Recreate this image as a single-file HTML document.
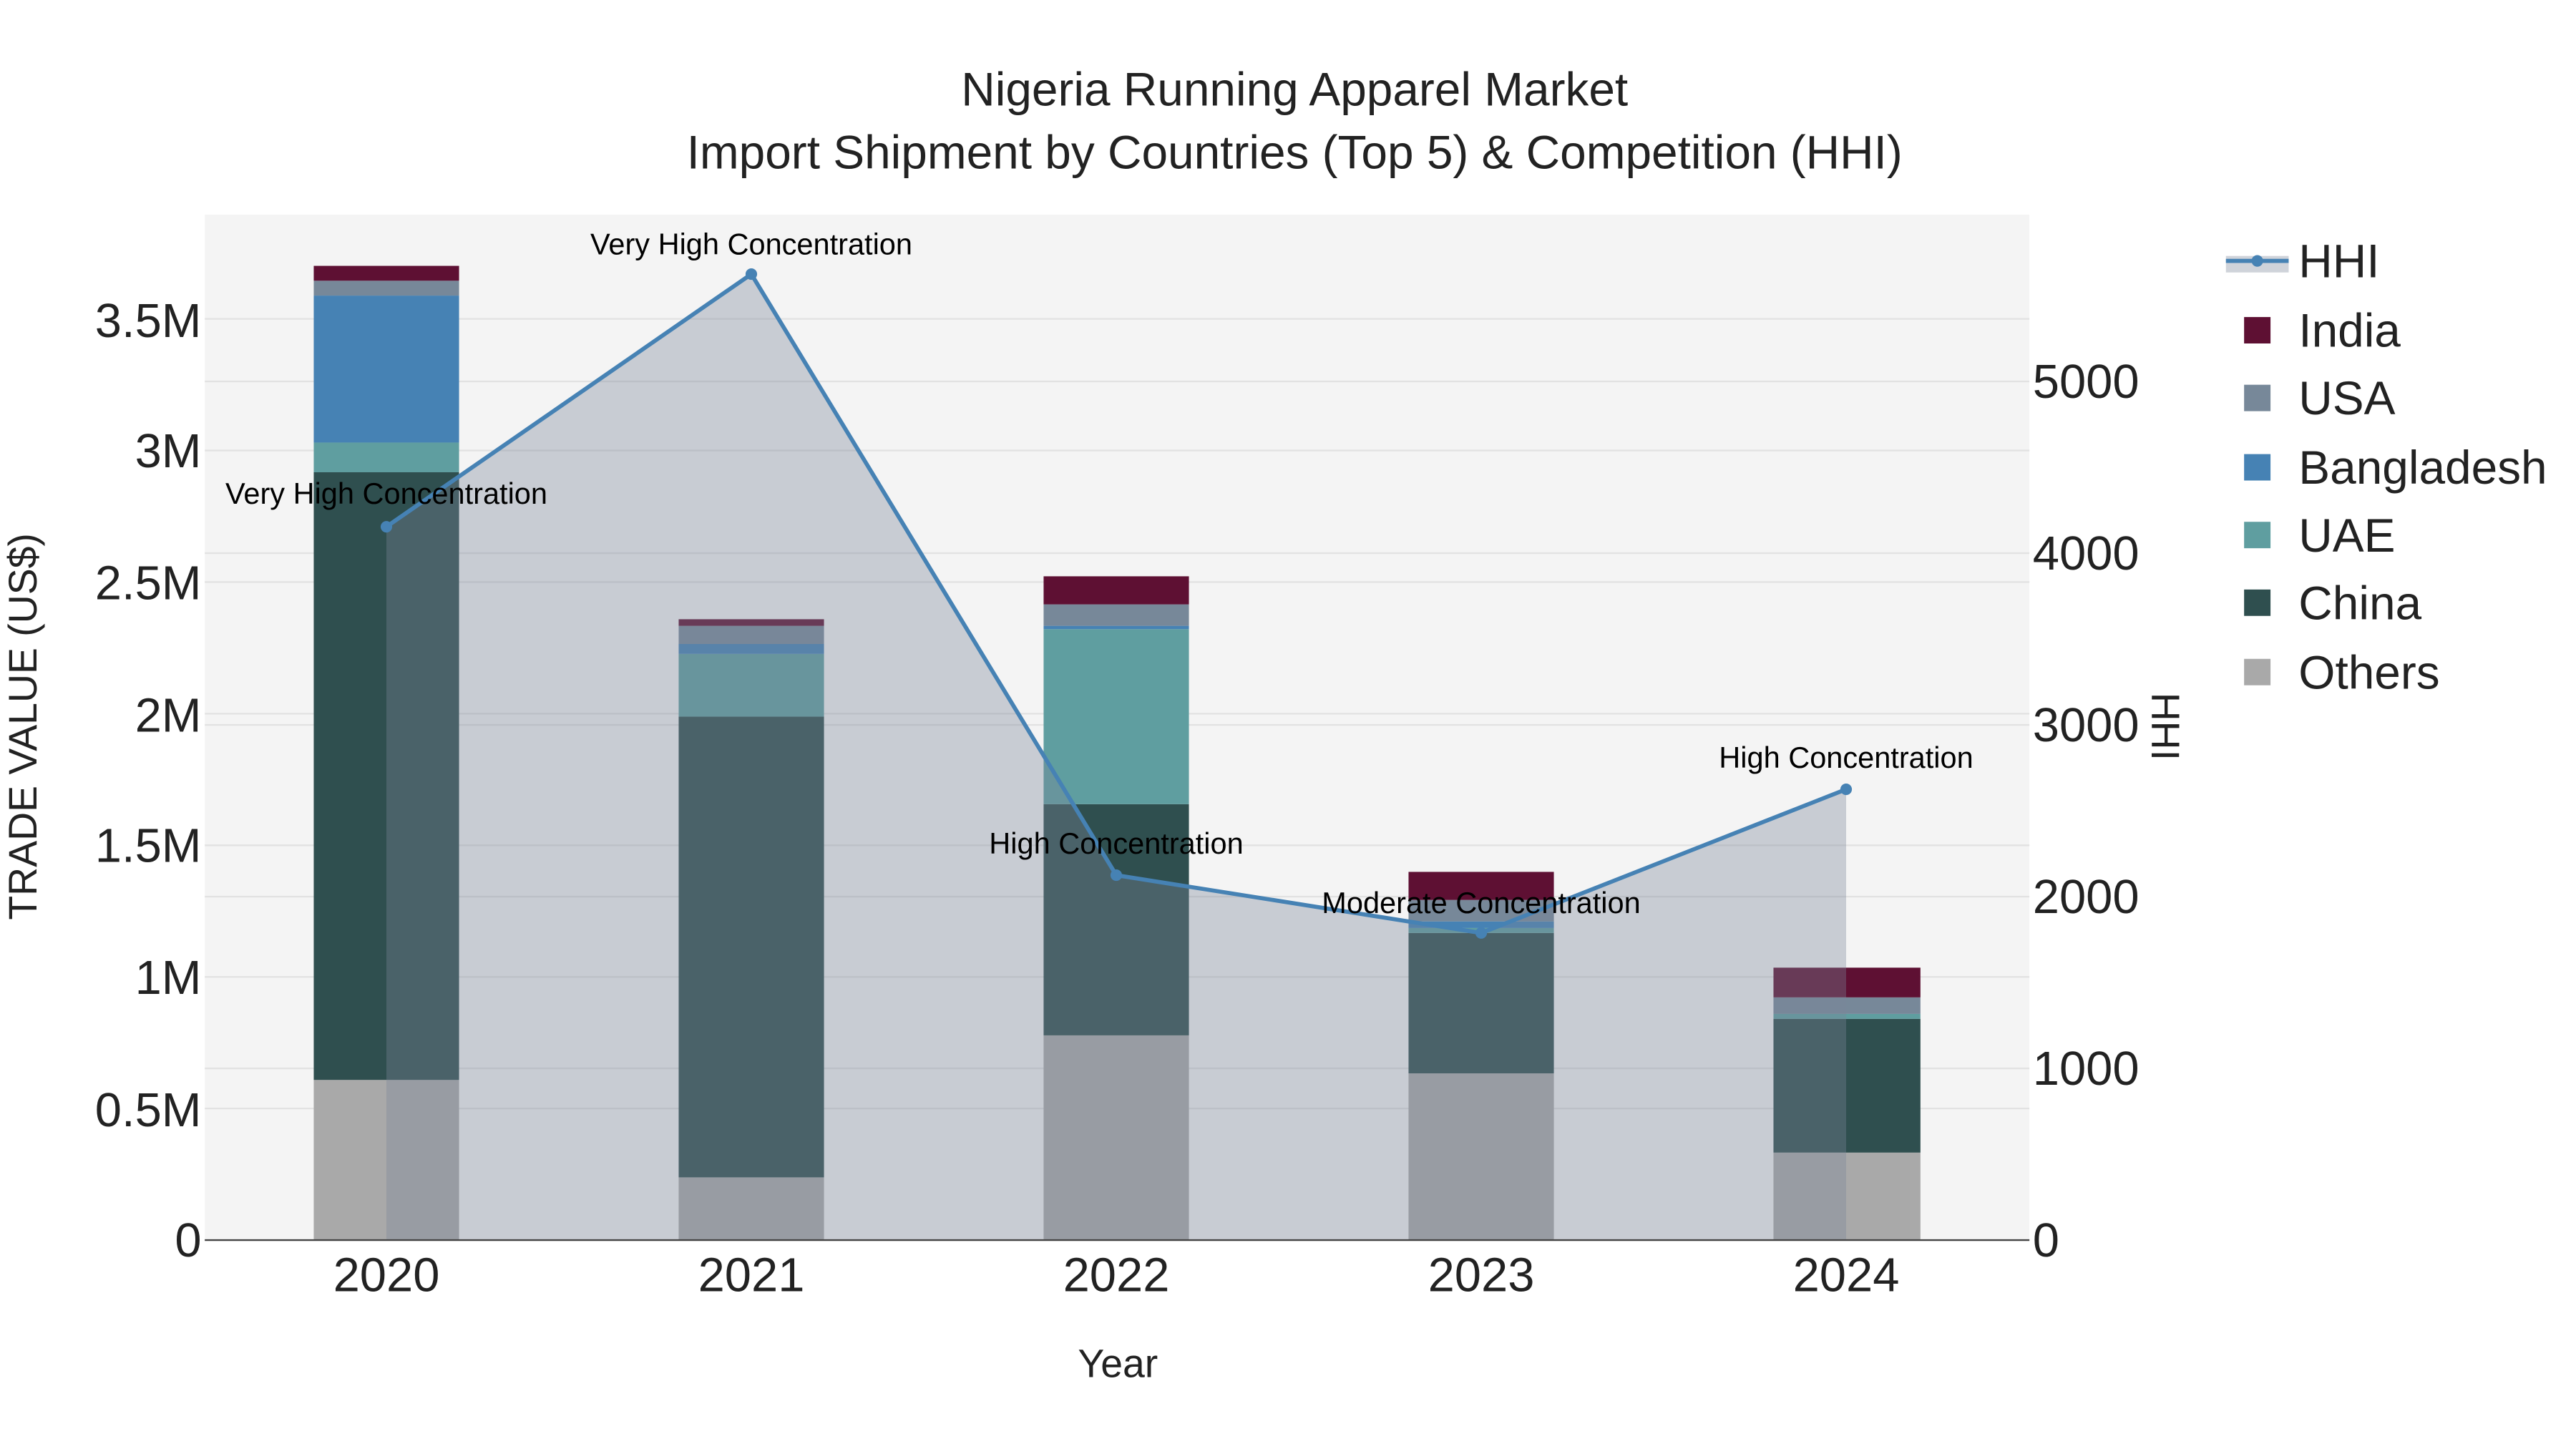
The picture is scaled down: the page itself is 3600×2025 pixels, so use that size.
<!DOCTYPE html>
<html><head><meta charset="utf-8"><style>html,body{margin:0;padding:0;background:#fff}svg{display:block}</style></head>
<body>
<svg width="3600" height="2025" viewBox="0 0 1560 877.5" xmlns="http://www.w3.org/2000/svg" font-family="Liberation Sans, sans-serif">
<rect width="1560" height="877.5" fill="#fff"/>
<rect x="124" y="130" width="1105" height="621" fill="#f4f4f4"/>
<g stroke="#e2e2e2" stroke-width="1">
<line x1="124" x2="1229" y1="671.3" y2="671.3"/><line x1="124" x2="1229" y1="591.6" y2="591.6"/>
<line x1="124" x2="1229" y1="511.9" y2="511.9"/><line x1="124" x2="1229" y1="432.2" y2="432.2"/>
<line x1="124" x2="1229" y1="352.5" y2="352.5"/><line x1="124" x2="1229" y1="272.8" y2="272.8"/>
<line x1="124" x2="1229" y1="193.1" y2="193.1"/>
<line x1="124" x2="1229" y1="647" y2="647"/><line x1="124" x2="1229" y1="543" y2="543"/>
<line x1="124" x2="1229" y1="439" y2="439"/><line x1="124" x2="1229" y1="335" y2="335"/>
<line x1="124" x2="1229" y1="231" y2="231"/>
</g>
<g>
<rect x="190" y="654" width="88" height="97" fill="#a9a9a9"/>
<rect x="190" y="286" width="88" height="368" fill="#2f4f4f"/>
<rect x="190" y="268" width="88" height="18" fill="#5f9ea0"/>
<rect x="190" y="179" width="88" height="89" fill="#4682b4"/>
<rect x="190" y="170" width="88" height="9" fill="#778899"/>
<rect x="190" y="161" width="88" height="9" fill="#5e1033"/>

<rect x="411" y="713" width="88" height="38" fill="#a9a9a9"/>
<rect x="411" y="434" width="88" height="279" fill="#2f4f4f"/>
<rect x="411" y="396" width="88" height="38" fill="#5f9ea0"/>
<rect x="411" y="390" width="88" height="6" fill="#4682b4"/>
<rect x="411" y="379" width="88" height="11" fill="#778899"/>
<rect x="411" y="375" width="88" height="4" fill="#5e1033"/>

<rect x="632" y="627" width="88" height="124" fill="#a9a9a9"/>
<rect x="632" y="487" width="88" height="140" fill="#2f4f4f"/>
<rect x="632" y="381" width="88" height="106" fill="#5f9ea0"/>
<rect x="632" y="379" width="88" height="2" fill="#4682b4"/>
<rect x="632" y="366" width="88" height="13" fill="#778899"/>
<rect x="632" y="349" width="88" height="17" fill="#5e1033"/>

<rect x="853" y="650" width="88" height="101" fill="#a9a9a9"/>
<rect x="853" y="565" width="88" height="85" fill="#2f4f4f"/>
<rect x="853" y="562" width="88" height="3" fill="#5f9ea0"/>
<rect x="853" y="558" width="88" height="4" fill="#4682b4"/>
<rect x="853" y="545" width="88" height="13" fill="#778899"/>
<rect x="853" y="528" width="88" height="17" fill="#5e1033"/>

<rect x="1074" y="698" width="89" height="53" fill="#a9a9a9"/>
<rect x="1074" y="617" width="89" height="81" fill="#2f4f4f"/>
<rect x="1074" y="614" width="89" height="3" fill="#5f9ea0"/>
<rect x="1074" y="604" width="89" height="10" fill="#778899"/>
<rect x="1074" y="586" width="89" height="18" fill="#5e1033"/>
</g>
<path d="M234 751 L234 319 L455 166 L676 530 L897 565 L1118 478 L1118 751 Z" fill="rgba(122,133,153,0.36)"/>
<polyline points="234,319 455,166 676,530 897,565 1118,478" fill="none" stroke="#4682b4" stroke-width="2.5"/>
<g fill="#4682b4"><circle cx="234" cy="319" r="3.5"/><circle cx="455" cy="166" r="3.5"/><circle cx="676" cy="530" r="3.5"/><circle cx="897" cy="565" r="3.5"/><circle cx="1118" cy="478" r="3.5"/></g>
<line x1="124" x2="1229" y1="751" y2="751" stroke="#444" stroke-width="1"/>
<g font-size="18" fill="#000" text-anchor="middle">
<text x="234" y="305">Very High Concentration</text>
<text x="455" y="154">Very High Concentration</text>
<text x="676" y="517">High Concentration</text>
<text x="897" y="553">Moderate Concentration</text>
<text x="1118" y="465">High Concentration</text>
</g>
<g font-size="28.5" fill="#222" text-anchor="middle">
<text x="784" y="64">Nigeria Running Apparel Market</text>
<text x="784" y="102">Import Shipment by Countries (Top 5) &amp; Competition (HHI)</text>
</g>
<g font-size="29" fill="#222" text-anchor="end">
<text x="122" y="761">0</text><text x="122" y="682">0.5M</text><text x="122" y="602">1M</text>
<text x="122" y="522">1.5M</text><text x="122" y="443">2M</text><text x="122" y="363">2.5M</text>
<text x="122" y="283">3M</text><text x="122" y="204">3.5M</text>
</g>
<g font-size="29" fill="#222" text-anchor="start">
<text x="1231" y="761">0</text><text x="1231" y="657">1000</text><text x="1231" y="553">2000</text>
<text x="1231" y="449">3000</text><text x="1231" y="345">4000</text><text x="1231" y="241">5000</text>
</g>
<g font-size="29" fill="#222" text-anchor="middle">
<text x="234" y="782">2020</text><text x="455" y="782">2021</text><text x="676" y="782">2022</text>
<text x="897" y="782">2023</text><text x="1118" y="782">2024</text>
</g>
<text x="677" y="834" font-size="24" fill="#222" text-anchor="middle">Year</text>
<text transform="translate(22,440) rotate(-90)" font-size="24" fill="#222" text-anchor="middle">TRADE VALUE (US$)</text>
<text transform="translate(1303,440) rotate(90)" font-size="24" fill="#222" text-anchor="middle">HHI</text>
<rect x="1348" y="155" width="38" height="10" fill="rgba(122,133,153,0.36)"/>
<line x1="1348" x2="1386" y1="158" y2="158" stroke="#4682b4" stroke-width="2.5"/>
<circle cx="1367" cy="158" r="3.5" fill="#4682b4"/>
<g>
<rect x="1359" y="192" width="16" height="16" fill="#5e1033"/>
<rect x="1359" y="233" width="16" height="16" fill="#778899"/>
<rect x="1359" y="275" width="16" height="16" fill="#4682b4"/>
<rect x="1359" y="316" width="16" height="16" fill="#5f9ea0"/>
<rect x="1359" y="357" width="16" height="16" fill="#2f4f4f"/>
<rect x="1359" y="399" width="16" height="16" fill="#a9a9a9"/>
</g>
<g font-size="28.5" fill="#222">
<text x="1392" y="168">HHI</text>
<text x="1392" y="210">India</text>
<text x="1392" y="251">USA</text>
<text x="1392" y="293">Bangladesh</text>
<text x="1392" y="334">UAE</text>
<text x="1392" y="375">China</text>
<text x="1392" y="417">Others</text>
</g>
</svg>
</body></html>
